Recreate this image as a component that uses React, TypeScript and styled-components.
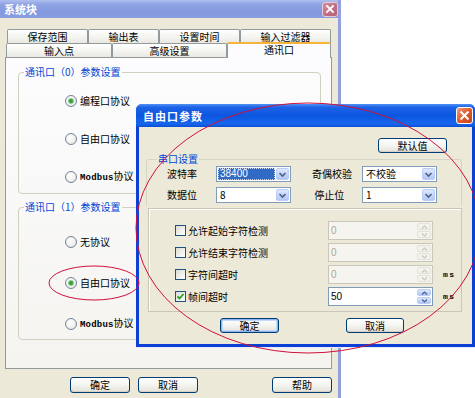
import React from "react";
import styled, { createGlobalStyle } from "styled-components";

const GlobalStyle = createGlobalStyle`
  html, body { margin: 0; padding: 0; background: #fff; }
  body {
    font-family: "Noto Sans CJK SC", "Liberation Sans", sans-serif;
    font-size: 10px;
    color: #000;
  }
  * { box-sizing: border-box; }
`;

const Screen = styled.div`
  position: relative;
  width: 475px;
  height: 398px;
  overflow: hidden;
  background: #fff;
`;

/* ---------- outer window ---------- */

const Window = styled.div`
  width: 341px;
  height: 398px;
  background: #ece9d8;
  border-right: 3px solid #95a1df;
  display: flex;
  flex-direction: column;
`;

const TitleBar = styled.div<{ $active?: boolean }>`
  display: flex;
  align-items: center;
  justify-content: space-between;
  height: ${(p) => (p.$active ? 23 : 18)}px;
  padding: ${(p) => (p.$active ? "0 2px 0 7px" : "0 0 0 4px")};
  color: #fff;
  font-weight: bold;
  font-size: 11px;
  letter-spacing: ${(p) => (p.$active ? "1px" : "0")};
  border-radius: ${(p) => (p.$active ? "6px 6px 0 0" : "0")};
  background: ${(p) =>
    p.$active
      ? "linear-gradient(#4f92f7 0%, #1e62e6 14%, #0c56df 50%, #1766ee 86%, #0a4fd6 100%)"
      : "linear-gradient(#b0bff0 0%, #8ea3e3 25%, #8299de 70%, #8a9fe2 100%)"};
`;

const CloseButton = styled.div<{ $active?: boolean }>`
  display: flex;
  align-items: center;
  justify-content: center;
  width: ${(p) => (p.$active ? 17 : 16)}px;
  height: ${(p) => (p.$active ? 17 : 15)}px;
  border-radius: 3px;
  border: 1px solid ${(p) => (p.$active ? "#fff" : "#e7c9d2")};
  background: ${(p) =>
    p.$active
      ? "linear-gradient(135deg, #f19a80 0%, #e05a2c 50%, #c6401c 100%)"
      : "linear-gradient(135deg, #d28c9d 0%, #c06d83 60%, #b46078 100%)"};
`;

const WindowBody = styled.div`
  display: flex;
  flex-direction: column;
  padding: 11px 0 0 5px;
`;

const TabRow = styled.div<{ $offset: number }>`
  display: flex;
  padding-left: ${(p) => p.$offset}px;
  height: 14px;
  position: relative;
`;

const Tab = styled.div<{ $w: number; $selected?: boolean }>`
  width: ${(p) => p.$w}px;
  height: ${(p) => (p.$selected ? 16 : 14)}px;
  margin-top: ${(p) => (p.$selected ? -1 : 0)}px;
  display: flex;
  align-items: center;
  justify-content: center;
  line-height: 12px;
  border: 1px solid #919b9c;
  border-bottom: none;
  border-top: ${(p) => (p.$selected ? "2px solid #f5b43d" : "1px solid #919b9c")};
  border-radius: 2px 2px 0 0;
  background: ${(p) =>
    p.$selected ? "#fcfcfe" : "linear-gradient(#ffffff, #f3f3ef 60%, #e9e8e1)"};
  position: relative;
  z-index: ${(p) => (p.$selected ? 2 : 1)};
  padding-bottom: ${(p) => (p.$selected ? 2 : 0)}px;
`;

const TabPanel = styled.div`
  width: 327px;
  height: 312px;
  border: 1px solid #919b9c;
  background: linear-gradient(#fcfcfe, #f5f4f0);
  padding: 14px 0 0 12px;
  display: flex;
  flex-direction: column;
  gap: 13px;
`;

const Group = styled.div<{ $w: number; $h: number }>`
  position: relative;
  width: ${(p) => p.$w}px;
  height: ${(p) => p.$h}px;
  border: 1px solid #d0d0bf;
  border-radius: 4px;
`;

const Legend = styled.span<{ $left?: number }>`
  position: absolute;
  top: -7px;
  left: ${(p) => p.$left ?? 5}px;
  padding: 0 1px;
  line-height: 12px;
  color: #0046d5;
  background-color: #fbfbfc;
`;

const RadioList = styled.div<{ $top: number; $gap: number }>`
  display: flex;
  flex-direction: column;
  padding: ${(p) => p.$top}px 0 0 46px;
  gap: ${(p) => p.$gap}px;
`;

const RadioItem = styled.div`
  display: flex;
  align-items: center;
  gap: 3px;
  height: 14px;
  line-height: 12px;
`;

const RadioCircle = styled.span<{ $on?: boolean }>`
  width: 12px;
  height: 12px;
  border-radius: 50%;
  border: 1px solid #6f849c;
  background: radial-gradient(circle at 40% 35%, #ffffff, #e4e3dc);
  display: flex;
  align-items: center;
  justify-content: center;
  &::after {
    content: "";
    display: ${(p) => (p.$on ? "block" : "none")};
    width: 4px;
    height: 4px;
    border-radius: 50%;
    background: #3b9a3b;
    box-shadow: 0 0 0 1px #8ed08e;
  }
`;

const Mono = styled.span`
  font-family: "Liberation Mono", monospace;
  font-size: 9px;
  font-weight: bold;
  letter-spacing: 0.2px;
`;

const Footer = styled.div`
  display: flex;
  padding: 8px 0 0 65px;
`;

const XpButton = styled.div<{ $w: number; $h?: number; $default?: boolean; $gap?: number }>`
  width: ${(p) => p.$w}px;
  height: ${(p) => p.$h ?? 16}px;
  margin-right: ${(p) => p.$gap ?? 0}px;
  display: flex;
  align-items: center;
  justify-content: center;
  line-height: 12px;
  border: 1px solid #003c74;
  border-radius: 3px;
  background: linear-gradient(#ffffff 0%, #f4f4f0 50%, #e3e2da 100%);
  box-shadow: ${(p) =>
    p.$default ? "inset 0 0 0 1px #8cb4f2, inset 0 0 0 2px #c5d9f8" : "inset 0 -1px 0 #d6d0c5"};
`;

/* ---------- inner dialog ---------- */

const Dialog = styled.div`
  position: absolute;
  left: 136px;
  top: 104px;
  width: 339px;
  height: 243px;
  display: flex;
  flex-direction: column;
  background: #0b3fd6;
  border-radius: 6px 6px 0 0;
  box-shadow: 1px 1px 0 #e8eaf6;
`;

const DialogBody = styled.div`
  flex: 1;
  margin: 0 3px 3px 3px;
  background: #ece9d8;
  display: flex;
  flex-direction: column;
  padding: 11px 0 0 7px;
`;

const TopRow = styled.div`
  display: flex;
  justify-content: flex-end;
  padding-right: 25px;
`;

const SerialGroup = styled.div`
  position: relative;
  width: 316px;
  height: 47px;
  margin-top: 6px;
  border: 1px solid #d6d4c6;
  border-bottom: none;
  border-radius: 3px 3px 0 0;
  padding: 6px 0 0 20px;
  display: grid;
  grid-template-columns: 49px 75px 21px 50px 75px;
  grid-auto-rows: 16px;
  row-gap: 5px;
  align-items: center;
`;

const SerialLegend = styled.span`
  position: absolute;
  top: -7px;
  left: 10px;
  padding: 0 1px;
  line-height: 12px;
  color: #0046d5;
  background: #ece9d8;
`;

const FieldLabel = styled.span<{ $col: number }>`
  grid-column: ${(p) => p.$col};
  line-height: 12px;
`;

const Combo = styled.div<{ $col: number }>`
  grid-column: ${(p) => p.$col};
  height: 16px;
  display: flex;
  align-items: stretch;
  border: 1px solid #7f9db9;
  background: #fff;
  padding: 1px;
`;

const ComboValue = styled.span<{ $selected?: boolean }>`
  flex: 1;
  display: flex;
  align-items: center;
  padding-left: 2px;
  margin-right: 1px;
  font-family: ${(p) => (p.$selected ? '"Liberation Sans", sans-serif' : "inherit")};
  font-size: 10px;
  line-height: 12px;
  color: ${(p) => (p.$selected ? "#fff" : "#000")};
  background: ${(p) => (p.$selected ? "#316ac5" : "transparent")};
  outline: ${(p) => (p.$selected ? "1px dotted #cfd9ee" : "none")};
  outline-offset: -1px;
`;

const ArrowButton = styled.span`
  width: 13px;
  display: flex;
  align-items: center;
  justify-content: center;
  border-radius: 2px;
  border: 1px solid #b9cdf6;
  background: linear-gradient(#dfe8fd, #c1d3fb 60%, #b2c7f5);
`;

const OptionsPanel = styled.div`
  width: 314px;
  height: 104px;
  margin: 2px 0 0 2px;
  border: 1px solid #c9c7b8;
  box-shadow: inset 1px 1px 0 #ffffff;
  padding: 12px 0 0 26px;
  display: grid;
  grid-template-columns: 153px 105px 9px auto;
  grid-auto-rows: 19px;
  row-gap: 3px;
  align-items: center;
`;

const CheckItem = styled.div`
  grid-column: 1;
  display: flex;
  align-items: center;
  gap: 2px;
  line-height: 12px;
`;

const CheckBox = styled.span`
  width: 11px;
  height: 11px;
  border: 1px solid #1c5180;
  background: linear-gradient(135deg, #dcdbd2, #ffffff);
  display: flex;
  align-items: center;
  justify-content: center;
`;

const Spin = styled.div<{ $disabled?: boolean }>`
  grid-column: 2;
  height: 19px;
  display: flex;
  border: 1px solid ${(p) => (p.$disabled ? "#c9c7ba" : "#7f9db9")};
  background: ${(p) => (p.$disabled ? "#f5f4ee" : "#fff")};
  padding: 1px;
`;

const SpinValue = styled.span<{ $disabled?: boolean }>`
  flex: 1;
  display: flex;
  align-items: center;
  padding-left: 1px;
  font-family: "Liberation Sans", sans-serif;
  font-size: 10px;
  color: ${(p) => (p.$disabled ? "#aca899" : "#000")};
`;

const SpinButtons = styled.span<{ $disabled?: boolean }>`
  width: 14px;
  display: flex;
  flex-direction: column;
  gap: 1px;
  & > span {
    flex: 1;
    display: flex;
    align-items: center;
    justify-content: center;
    border-radius: 2px;
    border: 1px solid ${(p) => (p.$disabled ? "#e4e2d8" : "#b9cdf6")};
    background: ${(p) =>
      p.$disabled ? "#f3f2ec" : "linear-gradient(#dfe8fd, #c1d3fb 60%, #b2c7f5)"};
  }
`;

const Unit = styled.span`
  grid-column: 4;
  font-family: "Liberation Mono", monospace;
  font-size: 8px;
  font-weight: bold;
  letter-spacing: 1.5px;
  padding-left: 1px;
`;

const DialogButtons = styled.div`
  display: flex;
  padding: 6px 0 0 74px;
`;

const Annotations = styled.svg`
  position: absolute;
  left: 0;
  top: 0;
  width: 475px;
  height: 398px;
  pointer-events: none;
`;

/* ---------- small drawings ---------- */

const CloseX = ({ size }: { size: number }) => (
  <svg width={size} height={size} viewBox="0 0 10 10">
    <path d="M2 2 L8 8 M8 2 L2 8" stroke="#fff" strokeWidth="1.8" strokeLinecap="square" />
  </svg>
);

const Chevron = ({ color }: { color: string }) => (
  <svg width="9" height="7" viewBox="0 0 9 7">
    <path d="M1.5 2 L4.5 5 L7.5 2" fill="none" stroke={color} strokeWidth="1.6" />
  </svg>
);

const Tick = () => (
  <svg width="9" height="9" viewBox="0 0 9 9">
    <path d="M1.5 4.5 L3.5 6.5 L7.5 2" fill="none" stroke="#21a121" strokeWidth="1.8" />
  </svg>
);

const SpinArrow = ({ up, color }: { up?: boolean; color: string }) => (
  <svg width="7" height="4" viewBox="0 0 7 4">
    <path d={up ? "M1 3.5 L3.5 1 L6 3.5" : "M1 0.5 L3.5 3 L6 0.5"} fill="none" stroke={color} strokeWidth="1.2" />
  </svg>
);

const Spinner = ({ value, disabled }: { value: string; disabled?: boolean }) => {
  const c = disabled ? "#c9c7ba" : "#4d6185";
  return (
    <Spin $disabled={disabled}>
      <SpinValue $disabled={disabled}>{value}</SpinValue>
      <SpinButtons $disabled={disabled}>
        <span><SpinArrow up color={c} /></span>
        <span><SpinArrow color={c} /></span>
      </SpinButtons>
    </Spin>
  );
};

const Check = ({ label, checked }: { label: string; checked?: boolean }) => (
  <CheckItem>
    <CheckBox>{checked && <Tick />}</CheckBox>
    {label}
  </CheckItem>
);

const Radio = ({ on, children }: { on?: boolean; children: React.ReactNode }) => (
  <RadioItem>
    <RadioCircle $on={on} />
    <span>{children}</span>
  </RadioItem>
);

const App = () => {
  return (
    <Screen>
      <GlobalStyle />
      <Window>
        <TitleBar>
          系统块
          <CloseButton>
            <CloseX size={10} />
          </CloseButton>
        </TitleBar>
        <WindowBody>
          <TabRow $offset={2}>
            <Tab $w={81}>保存范围</Tab>
            <Tab $w={71}>输出表</Tab>
            <Tab $w={81}>设置时间</Tab>
            <Tab $w={91}>输入过滤器</Tab>
          </TabRow>
          <TabRow $offset={1}>
            <Tab $w={106}>输入点</Tab>
            <Tab $w={115}>高级设置</Tab>
            <Tab $w={104} $selected>
              通讯口
            </Tab>
          </TabRow>
          <TabPanel>
            <Group $w={303} $h={122}>
              <Legend>通讯口（0）参数设置</Legend>
              <RadioList $top={21} $gap={24}>
                <Radio on>编程口协议</Radio>
                <Radio>自由口协议</Radio>
                <Radio>
                  <Mono>Modbus</Mono>协议
                </Radio>
              </RadioList>
            </Group>
            <Group $w={303} $h={133}>
              <Legend>通讯口（1）参数设置</Legend>
              <RadioList $top={27} $gap={27}>
                <Radio>无协议</Radio>
                <Radio on>自由口协议</Radio>
                <Radio>
                  <Mono>Modbus</Mono>协议
                </Radio>
              </RadioList>
            </Group>
          </TabPanel>
          <Footer>
            <XpButton $w={60} $gap={8}>确定</XpButton>
            <XpButton $w={60} $gap={74}>取消</XpButton>
            <XpButton $w={60}>帮助</XpButton>
          </Footer>
        </WindowBody>
      </Window>

      <Dialog>
        <TitleBar $active>
          自由口参数
          <CloseButton $active>
            <CloseX size={11} />
          </CloseButton>
        </TitleBar>
        <DialogBody>
          <TopRow>
            <XpButton $w={69} $h={15}>默认值</XpButton>
          </TopRow>
          <SerialGroup>
            <SerialLegend>串口设置</SerialLegend>
            <FieldLabel $col={1}>波特率</FieldLabel>
            <Combo $col={2}>
              <ComboValue $selected>38400</ComboValue>
              <ArrowButton><Chevron color="#4d6185" /></ArrowButton>
            </Combo>
            <FieldLabel $col={4}>奇偶校验</FieldLabel>
            <Combo $col={5}>
              <ComboValue>不校验</ComboValue>
              <ArrowButton><Chevron color="#4d6185" /></ArrowButton>
            </Combo>
            <FieldLabel $col={1}>数据位</FieldLabel>
            <Combo $col={2}>
              <ComboValue>8</ComboValue>
              <ArrowButton><Chevron color="#4d6185" /></ArrowButton>
            </Combo>
            <FieldLabel $col={4}>&nbsp;停止位</FieldLabel>
            <Combo $col={5}>
              <ComboValue>1</ComboValue>
              <ArrowButton><Chevron color="#4d6185" /></ArrowButton>
            </Combo>
          </SerialGroup>
          <OptionsPanel>
            <Check label="允许起始字符检测" />
            <Spinner value="0" disabled />
            <Check label="允许结束字符检测" />
            <Spinner value="0" disabled />
            <Check label="字符间超时" />
            <Spinner value="0" disabled />
            <Unit>ms</Unit>
            <Check label="帧间超时" checked />
            <Spinner value="50" />
            <Unit>ms</Unit>
          </OptionsPanel>
          <DialogButtons>
            <XpButton $w={59} $h={15} $default $gap={67}>确定</XpButton>
            <XpButton $w={58} $h={15}>取消</XpButton>
          </DialogButtons>
        </DialogBody>
      </Dialog>

      <Annotations viewBox="0 0 475 398">
        <ellipse cx="94" cy="283" rx="45" ry="17" fill="none" stroke="#d0103a" strokeWidth="1" />
        <ellipse cx="308" cy="228" rx="172" ry="125" fill="none" stroke="#d0103a" strokeWidth="1" />
      </Annotations>
    </Screen>
  );
};

export default App;
